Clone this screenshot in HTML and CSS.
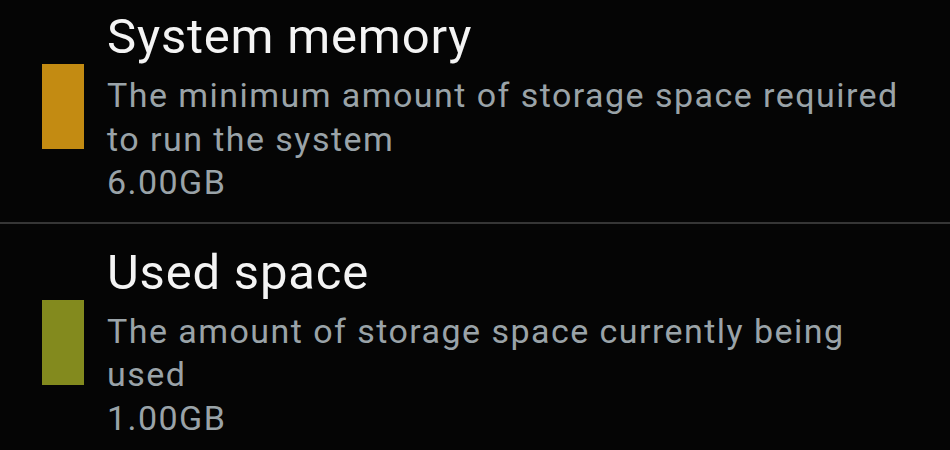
FILE: index.html
```html
<!DOCTYPE html>
<html lang="en">
<head>
<meta charset="utf-8">
<link rel="stylesheet" href="styles.css">
</head>
<body>
<ul class="storage-list">
  <li class="storage-item">
    <span class="swatch swatch-system"></span>
    <div class="info">
      <div class="title">System memory</div>
      <div class="desc">The minimum amount of storage space required to run the system</div>
      <div class="size">6.00GB</div>
    </div>
  </li>
  <li class="storage-item">
    <span class="swatch swatch-used"></span>
    <div class="info">
      <div class="title">Used space</div>
      <div class="desc">The amount of storage space currently being used</div>
      <div class="size">1.00GB</div>
    </div>
  </li>
</ul>
</body>
</html>
```
FILE: styles.css
```css
html, body {
  margin: 0;
  padding: 0;
  background: #050505;
  width: 950px;
  height: 450px;
  overflow: hidden;
}
body {
  font-family: Roboto, "Noto Sans", sans-serif;
}
.storage-list {
  list-style: none;
  margin: -12px 0 0 0;
  padding: 0;
}
.storage-item {
  display: flex;
  align-items: center;
  gap: 23px;
  padding: 21px 0 17px 42px;
}
.storage-item + .storage-item {
  border-top: 2px solid #363636;
}
.swatch {
  flex: 0 0 42px;
  height: 85px;
}
.swatch-system { background: #c38b12; }
.swatch-used { background: #838a1e; }
.info {
  flex: 1;
  min-width: 0;
  padding-right: 30px;
}
.title {
  color: #f4f4f4;
  font-size: 49px;
  line-height: 56px;
  letter-spacing: 0.8px;
}
.desc, .size {
  color: #9aa3a8;
  font-size: 34px;
  line-height: 43.5px;
  letter-spacing: 1.45px;
}
.desc {
  margin-top: 9px;
}
```
